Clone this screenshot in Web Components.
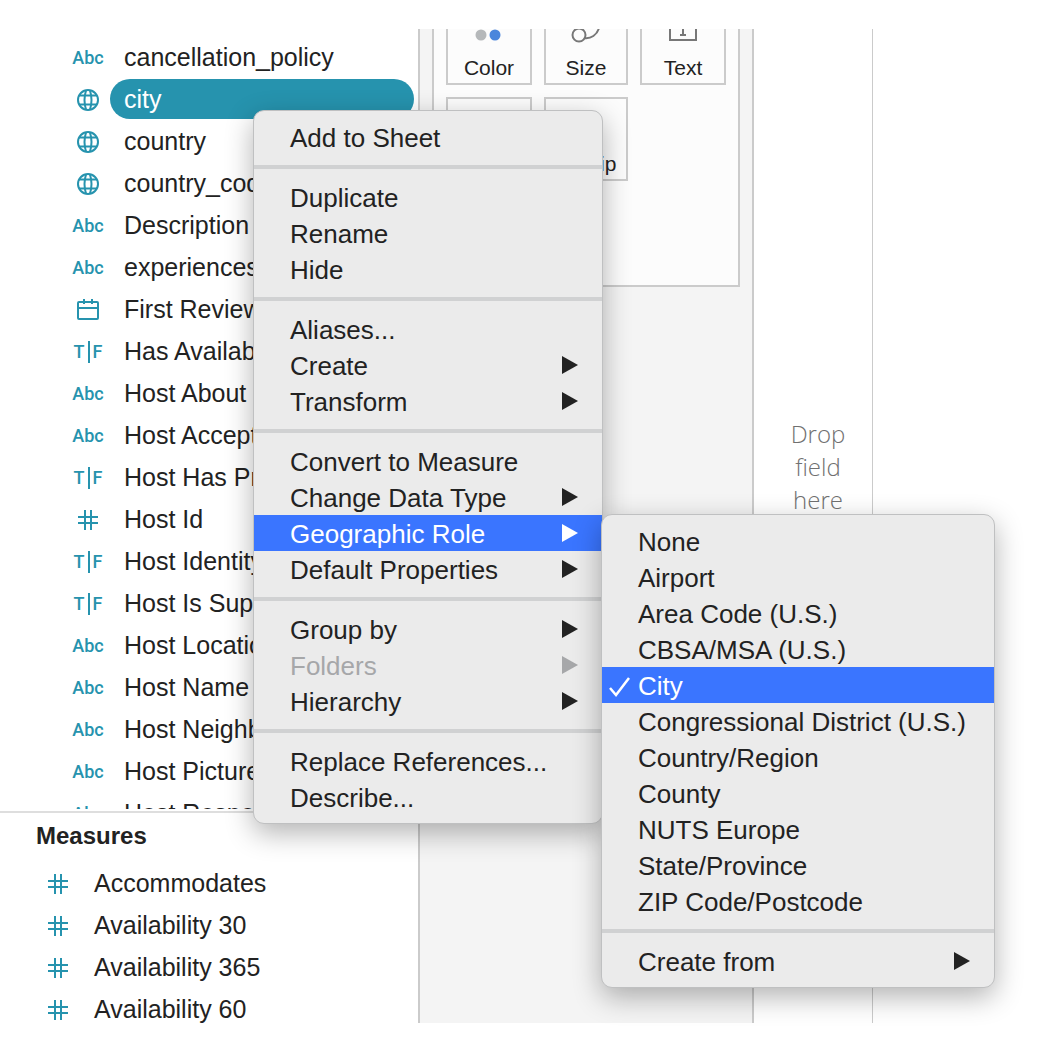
<!DOCTYPE html>
<html lang="en">
<head>
<meta charset="utf-8">
<title>Data pane</title>
<style>
  html, body { margin: 0; height: 100%; background: #fff; }
  body { font-family: "Liberation Sans", Arial, sans-serif; color: #222; overflow: hidden; }
</style>
</head>
<body>
<app-workspace></app-workspace>

<script>
const make = (name, html, setup) => {
  const template = document.createElement('template');
  template.innerHTML = html;
  customElements.define(name, class extends HTMLElement {
    constructor() {
      super();
      this.attachShadow({ mode: 'open' }).append(template.content.cloneNode(true));
    }
    connectedCallback() { if (setup) setup(this, this.shadowRoot); }
  });
};

const ICONS = {
  abc: '<span>Abc</span>',
  bool: '<span class="bool">T<i></i>F</span>',
  globe: '<svg width="22" height="22" viewBox="0 0 22 22"><g fill="none" stroke="currentColor" stroke-width="2"><circle cx="11" cy="11" r="10"/><path d="M9 1.500Q6 11 9 20.500M13 1.500Q16 11 13 20.500M2 6.500H20M2 15.500H20"/></g></svg>',
  date: '<svg width="22" height="22" viewBox="0 0 22 22"><g fill="none" stroke="currentColor" stroke-width="2"><rect x="1" y="3" width="20" height="17" rx="1"/><path d="M1 9H21M7 0V5M15 0V5"/></g></svg>',
  number: '<svg width="20" height="20" viewBox="0 0 20 20"><path d="M7 0V20M13 0V20M0 7H20M0 13H20" fill="none" stroke="currentColor" stroke-width="2"/></svg>'
};

make('type-icon', `
  <style>
    :host { display: flex; align-items: center; justify-content: center; width: 32px; height: 42px;
            color: #2693ae; font: 500 18px/42px Roboto, sans-serif; }
    div { padding-top: 2px; }
    svg { display: block; }
    .bool { display: flex; align-items: center; gap: 3px; }
    i { width: 2px; height: 22px; background: currentColor; }
  </style><div></div>`,
  (el, root) => { root.querySelector('div').innerHTML = ICONS[el.getAttribute('kind')]; });

make('field-row', `
  <style>
    :host { display: flex; height: 42px; padding-right: 4px; }
    type-icon { flex: none; }
    button { flex: 1; min-width: 0; margin: 1px 0 1px 6px; padding: 0 14px; border: 0; border-radius: 20px;
             background: none; color: inherit; font: 25px/40px "Liberation Sans", Arial, sans-serif;
             text-align: left; white-space: nowrap; overflow: hidden; }
    :host([selected]) button { background: #2693ae; color: #fff; }
  </style>
  <button type="button"><slot></slot></button>`,
  (el, root) => {
    const icon = document.createElement('type-icon');
    icon.setAttribute('kind', el.getAttribute('kind'));
    root.querySelector('button').before(icon);
  });

make('data-pane', `
  <style>
    :host { display: flex; flex-direction: column; box-sizing: border-box; border-right: 2px solid #cbcbcb; }
    .dimensions { flex: 1; min-height: 0; margin-bottom: 2px; padding: 7px 0 0 72px; box-sizing: border-box; overflow: hidden; }
    .measures { flex: none; height: 212px; box-sizing: border-box; border-top: 2px solid #dedede; overflow: hidden; }
    h2 { margin: 0; padding: 0 36px; font-size: 24px; line-height: 45px; height: 49px; }
    .measures slot { display: block; padding-left: 42px; }
  </style>
  <div class="dimensions"><slot></slot></div>
  <section class="measures"><h2>Measures</h2><slot name="measure"></slot></section>`);

make('mark-button', `
  <style>
    :host { display: flex; height: 84px; }
    :host([cut]) { height: 56px; }
    button { flex: 1; display: flex; flex-direction: column; justify-content: space-between; align-items: center;
             padding: 0 0 3px; border: 2px solid #cbcbcb; background: #fcfcfc; color: #222;
             font: 21px/24px "Liberation Sans", Arial, sans-serif; }
    :host([cut]) button { border-top: 0; }
  </style>
  <button type="button"><slot name="icon"><span></span></slot><slot></slot></button>`);

make('marks-card', `
  <style>
    :host { display: block; box-sizing: border-box; padding: 0 12px; background: #f4f4f4; border-right: 2px solid #cbcbcb; }
    .card { border: 2px solid #cbcbcb; border-top: 0; background: #fcfcfc; padding: 0 12px 104px; }
    .grid { display: grid; grid-template-columns: 43fr 42fr 43fr; gap: 12px; }
    svg { display: block; overflow: hidden; }
  </style>
  <div class="card"><div class="grid">
    <mark-button cut>Color
      <svg slot="icon" width="30" height="14"><circle cx="7" cy="6" r="5.500" fill="#b5b8ba"/><circle cx="21" cy="6" r="5.500" fill="#4a86dc"/></svg></mark-button>
    <mark-button cut>Size
      <svg slot="icon" width="30" height="14"><g fill="none" stroke="#777" stroke-width="2"><circle cx="8" cy="6" r="6.500"/><path d="M13 9C20 10 26 6 28 -1"/></g></svg></mark-button>
    <mark-button cut>Text
      <svg slot="icon" width="30" height="14"><g fill="none" stroke="#777" stroke-width="2"><path d="M2 -2V11H28V-2"/><path d="M15 -2V6M12 6H18"/></g></svg></mark-button>
    <mark-button>Detail</mark-button>
    <mark-button>Tooltip</mark-button>
  </div></div>`);

make('drop-zone', `
  <style>
    :host { display: block; box-sizing: border-box; padding: 388px 20px 0 30px; border-right: 1px solid #cbcbcb;
            color: #707070; font: 300 24px/33px "Open Sans", sans-serif; text-align: center; }
  </style><slot></slot>`);

make('menu-item', `
  <style>
    :host { display: block; }
    button { display: flex; align-items: center; width: 100%; height: 36px; box-sizing: border-box; padding: 0 24px 0 36px;
             border: 0; background: none; color: #222; text-align: left; white-space: nowrap; position: relative;
             font: 26px/34px "Liberation Sans", Arial, sans-serif; }
    .label { flex: 1; padding-top: 2px; }
    svg { display: none; flex: none; }
    :host([more]) .arrow { display: block; }
    :host([checked]) .tick { display: block; position: absolute; left: 7px; top: 9px; }
    :host([active]) button { background: #3a75ff; color: #fff; }
    :host([disabled]) button { color: #a6a7a9; }
  </style>
  <button type="button" role="menuitem">
    <svg class="tick" width="22" height="22" viewBox="0 0 22 22"><path d="M1 12L7 19L20 2" fill="none" stroke="currentColor" stroke-width="2.500"/></svg>
    <span class="label"><slot></slot></span>
    <svg class="arrow" width="16" height="18" viewBox="0 0 16 18"><path d="M0 0L16 9L0 18Z" fill="currentColor"/></svg>
  </button>`,
  (el, root) => { root.querySelector('button').disabled = el.hasAttribute('disabled'); });

make('menu-separator', `
  <style>:host { display: block; height: 4px; margin: 10px 0; background: #d0d1d2; }</style>`);

make('context-menu', `
  <style>
    :host { display: block; box-sizing: border-box; padding: 8px 0; border: 1px solid #bfc0c1; border-radius: 11px;
            background: #ebebeb; box-shadow: 0 9px 28px rgba(0,0,0,.3); }
  </style><div role="menu"><slot></slot></div>`);

make('app-workspace', `
  <style>
    :host { display: flex; position: relative; height: 100vh; box-sizing: border-box; padding: 29px 0; }
    data-pane { flex: 0 0 420px; }
    marks-card { flex: 0 0 334px; }
    drop-zone { flex: 0 0 119px; }
    main { flex: 1; }
    context-menu { position: absolute; }
    .field-menu { left: 253px; top: 110px; width: 350px; }
    .role-menu { left: 601px; top: 514px; width: 394px; }
  </style>
  <data-pane>
    <field-row kind="abc">cancellation_policy</field-row>
    <field-row kind="globe" selected>city</field-row>
    <field-row kind="globe">country</field-row>
    <field-row kind="globe">country_code</field-row>
    <field-row kind="abc">Description</field-row>
    <field-row kind="abc">experiences</field-row>
    <field-row kind="date">First Review</field-row>
    <field-row kind="bool">Has Availability</field-row>
    <field-row kind="abc">Host About</field-row>
    <field-row kind="abc">Host Accept</field-row>
    <field-row kind="bool">Host Has Pr</field-row>
    <field-row kind="number">Host Id</field-row>
    <field-row kind="bool">Host Identity</field-row>
    <field-row kind="bool">Host Is Super</field-row>
    <field-row kind="abc">Host Location</field-row>
    <field-row kind="abc">Host Name</field-row>
    <field-row kind="abc">Host Neighb</field-row>
    <field-row kind="abc">Host Picture</field-row>
    <field-row kind="abc">Host Respon</field-row>
    <field-row slot="measure" kind="number">Accommodates</field-row>
    <field-row slot="measure" kind="number">Availability 30</field-row>
    <field-row slot="measure" kind="number">Availability 365</field-row>
    <field-row slot="measure" kind="number">Availability 60</field-row>
  </data-pane>
  <marks-card></marks-card>
  <drop-zone>Drop<br>field<br>here</drop-zone>
  <main></main>

  <context-menu class="field-menu">
    <menu-item>Add to Sheet</menu-item>
    <menu-separator></menu-separator>
    <menu-item>Duplicate</menu-item>
    <menu-item>Rename</menu-item>
    <menu-item>Hide</menu-item>
    <menu-separator></menu-separator>
    <menu-item>Aliases...</menu-item>
    <menu-item more>Create</menu-item>
    <menu-item more>Transform</menu-item>
    <menu-separator></menu-separator>
    <menu-item>Convert to Measure</menu-item>
    <menu-item more>Change Data Type</menu-item>
    <menu-item more active>Geographic Role</menu-item>
    <menu-item more>Default Properties</menu-item>
    <menu-separator></menu-separator>
    <menu-item more>Group by</menu-item>
    <menu-item more disabled>Folders</menu-item>
    <menu-item more>Hierarchy</menu-item>
    <menu-separator></menu-separator>
    <menu-item>Replace References...</menu-item>
    <menu-item>Describe...</menu-item>
  </context-menu>

  <context-menu class="role-menu">
    <menu-item>None</menu-item>
    <menu-item>Airport</menu-item>
    <menu-item>Area Code (U.S.)</menu-item>
    <menu-item>CBSA/MSA (U.S.)</menu-item>
    <menu-item active checked>City</menu-item>
    <menu-item>Congressional District (U.S.)</menu-item>
    <menu-item>Country/Region</menu-item>
    <menu-item>County</menu-item>
    <menu-item>NUTS Europe</menu-item>
    <menu-item>State/Province</menu-item>
    <menu-item>ZIP Code/Postcode</menu-item>
    <menu-separator></menu-separator>
    <menu-item more>Create from</menu-item>
  </context-menu>`);
</script>
</body>
</html>
